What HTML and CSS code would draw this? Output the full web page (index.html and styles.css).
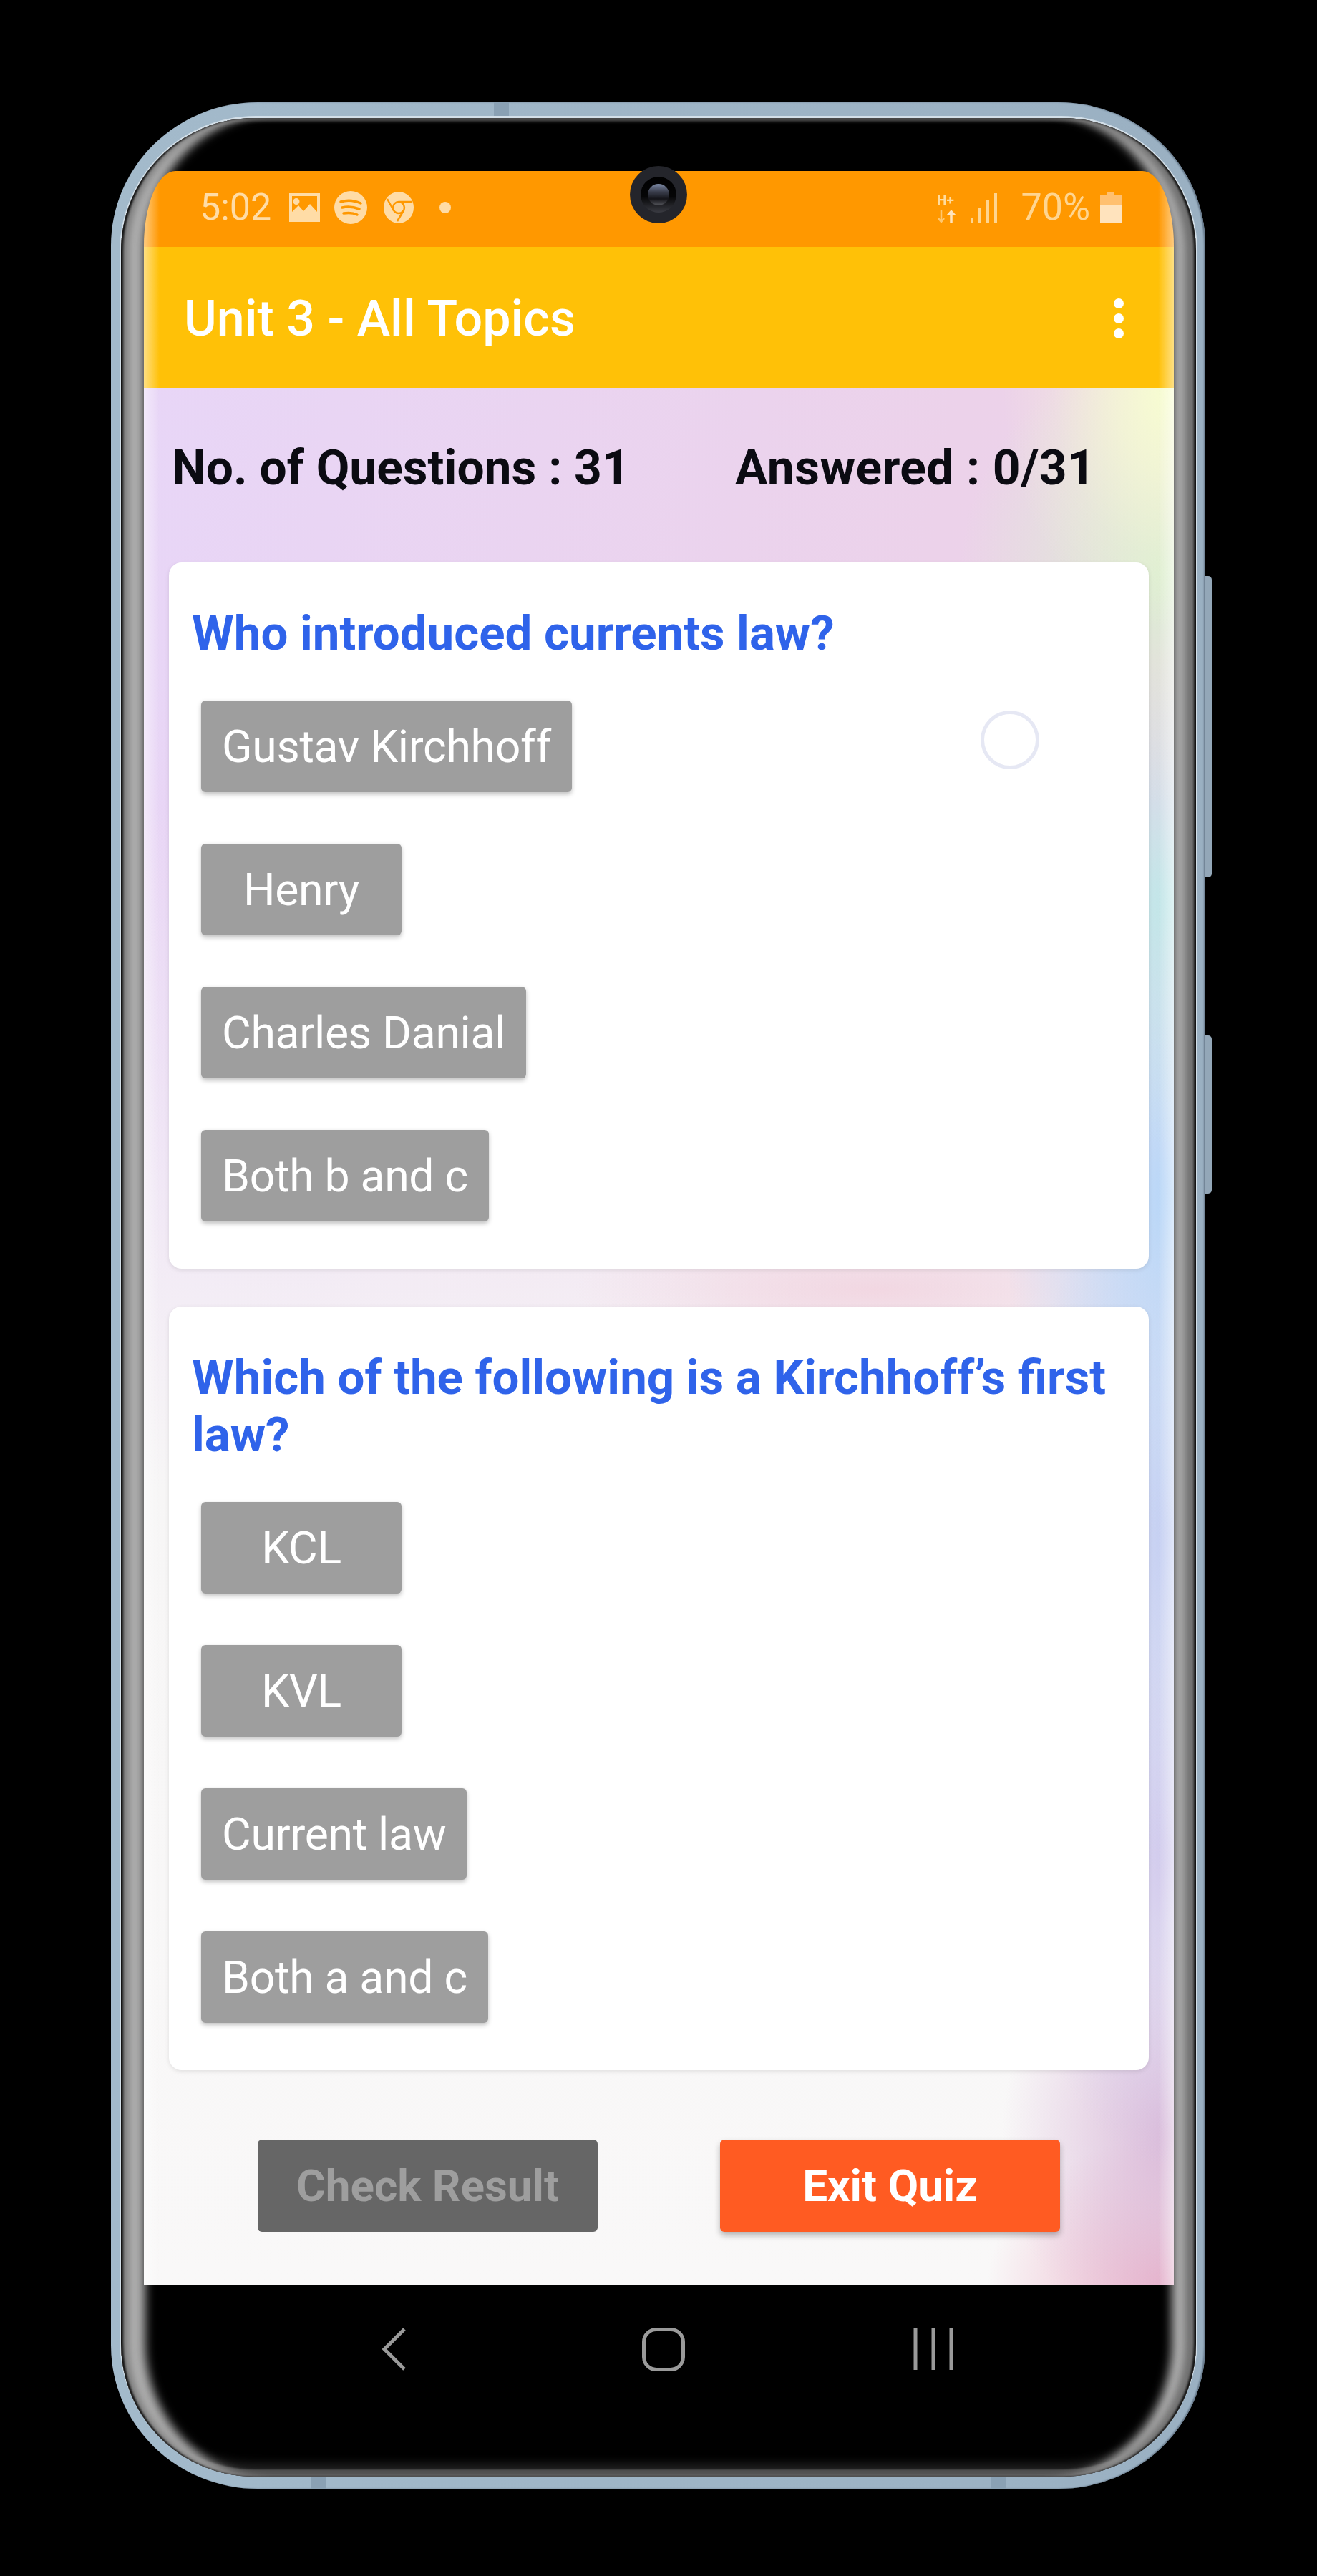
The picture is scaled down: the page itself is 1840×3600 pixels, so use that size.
FILE: index.html
```html
<!DOCTYPE html>
<html lang="en">
<head>
<meta charset="utf-8">
<title>Unit 3 - All Topics</title>
<link rel="stylesheet" href="styles.css">
</head>
<body>
<div class="phone">
  <span class="side-key key-a"></span>
  <span class="side-key key-b"></span>
  <span class="tick tick-top"></span>
  <span class="tick tick-bl"></span>
  <span class="tick tick-br"></span>
  <div class="rim">
    <div class="bezel">
      <span class="camera"><span class="well"><span class="lens"></span></span></span>
      <div class="screen">
        <div class="status">
          <div class="status-left">
            <span class="time">5:02</span>
            <svg class="ic ic-gallery" viewBox="0 0 43 40"><path fill="currentColor" fill-rule="evenodd" d="M0 0h43v40H0zM4 4v22l9-9 7 8 9-10 10 11V4zM10 7a4.500 4.500 0 1 1 0 9 4.500 4.500 0 0 1 0-9z"/></svg>
            <svg class="ic ic-spotify" viewBox="0 0 46 46"><circle cx="23" cy="23" r="23" fill="currentColor"/><path d="M9 15c9-3 19-2 28 2M11 23c8-2 16-1 24 2M13 31c6-1 13-1 19 2" fill="none" stroke="#ff9800" stroke-width="3.500" stroke-linecap="round"/></svg>
            <svg class="ic ic-chrome" viewBox="0 0 42 44"><ellipse cx="21" cy="22" rx="21" ry="22" fill="currentColor"/><circle cx="21" cy="22" r="8" fill="none" stroke="#ff9800" stroke-width="2.500"/><path d="M21 14h18M14 26 5 10M28 26l-9 15" fill="none" stroke="#ff9800" stroke-width="2.500"/></svg>
            <span class="dot"></span>
          </div>
          <div class="status-right">
            <svg class="ic ic-net" viewBox="0 0 30 44"><text x="1" y="18" class="net-text">H+</text><path d="M7 26v16M3 37l4 5 4-5" fill="none" stroke="currentColor" stroke-width="2.500" opacity=".7"/><path d="M21 44V32" fill="none" stroke="#ffe3bd" stroke-width="3.500"/><path d="m14 33 7-8 7 8z" fill="#ffe3bd"/></svg>
            <svg class="ic ic-bars" viewBox="0 0 36 44"><path d="M1 37v7M11 22v22M23 12v32M34 2v42" fill="none" stroke="currentColor" stroke-width="4"/></svg>
            <span class="pct">70%</span>
            <svg class="ic ic-batt" viewBox="0 0 30 44"><path d="M10 0h10v4h10v40H0V4h10z" fill="#ffc070"/><path d="M0 19h30v25H0z" fill="#ffe3bd"/></svg>
          </div>
        </div>
        <header class="toolbar">
          <h1 class="title">Unit 3 - All Topics</h1>
          <div class="menu"><i></i><i></i><i></i></div>
        </header>
        <main class="content">
          <div class="stats">
            <span class="stat-a">No. of Questions : 31</span>
            <span class="stat-b">Answered : 0/31</span>
          </div>
          <section class="card">
            <span class="radio"></span>
            <h2 class="question">Who introduced currents law?</h2>
            <div class="options">
              <button class="opt">Gustav Kirchhoff</button>
              <button class="opt">Henry</button>
              <button class="opt">Charles Danial</button>
              <button class="opt">Both b and c</button>
            </div>
          </section>
          <section class="card">
            <h2 class="question">Which of the following is a Kirchhoff’s first law?</h2>
            <div class="options">
              <button class="opt">KCL</button>
              <button class="opt">KVL</button>
              <button class="opt">Current law</button>
              <button class="opt">Both a and c</button>
            </div>
          </section>
          <div class="actions">
            <button class="act act-check">Check Result</button>
            <button class="act act-exit">Exit Quiz</button>
          </div>
        </main>
      </div>
      <nav class="navbar">
        <svg class="nav-back" viewBox="0 0 34 60"><path d="M31 2 3 30l28 28" fill="none" stroke="currentColor" stroke-width="5"/></svg>
        <span class="nav-home"></span>
        <svg class="nav-recent" viewBox="0 0 56 60"><path d="M3 1v58M28 1v58M53 1v58" fill="none" stroke="currentColor" stroke-width="5"/></svg>
      </nav>
    </div>
  </div>
</div>
</body>
</html>
```
FILE: styles.css
```css
* { box-sizing: border-box; }
html, body { margin: 0; padding: 0; background: #000; }
body {
  width: 1840px;
  height: 3600px;
  padding: 143px 0 0 155px;
  font-family: Roboto, "Liberation Sans", sans-serif;
  overflow: hidden;
}
.phone {
  position: relative;
  width: 1529px;
  height: 3335px;
  padding: 19px 11px 17px 12px;
  border-radius: 205px / 200px;
  background: linear-gradient(to right, #a3bacb 0, #9ab0c2 100%);
  box-shadow: inset -2px 0 2px #66788a;
}
.rim {
  height: 100%;
  padding: 3px 2px 0 2px;
  border-radius: 190px;
  background: #d3dfe8;
}
.bezel {
  position: relative;
  height: 100%;
  padding: 74px 31px 0 32px;
  border-radius: 186px;
  background: #000;
  box-shadow:
    inset 4px 0 3px -1px #111,
    inset 14px 0 12px -4px #777,
    inset -4px 0 3px -1px #111,
    inset -20px 0 12px -4px #6f6f6f,
    inset 44px 0 14px -10px #aeaeae,
    inset -44px 0 14px -10px #b0b0b0,
    inset 0 5px 4px -1px #444,
    inset 0 -11px 2px -1px #505050,
    inset 0 -26px 14px -8px #222;
}
.side-key {
  position: absolute;
  right: -9px;
  width: 9px;
  border-radius: 0 5px 5px 0;
  background: #93a7b8;
}
.key-a { top: 662px; height: 421px; }
.key-b { top: 1304px; height: 221px; }
.tick {
  position: absolute;
  width: 21px;
  height: 17px;
  background: #8aa1b4;
}
.tick-top { top: 0; left: 535px; height: 19px; }
.tick-bl { bottom: 0; left: 280px; }
.tick-br { bottom: 0; left: 1229px; }
.camera {
  position: absolute;
  z-index: 3;
  left: 711px;
  top: 67px;
  width: 80px;
  height: 80px;
  border-radius: 50%;
  background: #24252b;
  display: flex;
  align-items: center;
  justify-content: center;
}
.well {
  width: 50px;
  height: 50px;
  border-radius: 50%;
  background: linear-gradient(to bottom, #000 0, #050506 55%, #3a3b42 100%);
  display: flex;
  align-items: center;
  justify-content: center;
}
.lens {
  width: 30px;
  height: 30px;
  border-radius: 50%;
  background: linear-gradient(to bottom, #7d8aa6 0, #3d4150 35%, #131318 70%, #55565c 100%);
}
.screen {
  position: relative;
  height: 2955px;
  overflow: hidden;
  border-radius: 44px 44px 0 0 / 105px 105px 0 0;
  filter: blur(.6px);
}
.screen::after {
  content: "";
  position: absolute;
  inset: 0;
  pointer-events: none;
  background:
    linear-gradient(to right, rgba(255,255,255,.5) 0, rgba(255,255,255,0) 22px),
    linear-gradient(to left, rgba(255,255,255,.5) 0, rgba(255,255,255,0) 22px);
}
.status {
  height: 106px;
  background: #ff9800;
  color: #ffdca6;
  display: flex;
  align-items: flex-start;
  justify-content: space-between;
  padding: 0 73px 0 78px;
}
.status-left, .status-right { display: flex; align-items: center; height: 102px; }
.time { font-size: 52px; line-height: 102px; width: 125px; }
.ic { display: block; }
.ic-gallery { width: 43px; height: 40px; }
.ic-spotify { width: 46px; height: 46px; margin-left: 20px; }
.ic-chrome { width: 42px; height: 44px; margin-left: 23px; }
.dot { width: 16px; height: 16px; border-radius: 50%; background: currentColor; margin-left: 36px; }
.ic-net { width: 30px; height: 44px; color: #ffdc9e; }
.net-text { font: 700 19px Roboto, sans-serif; fill: currentColor; }
.ic-bars { width: 36px; height: 44px; margin-left: 19px; color: #ffd590; }
.pct { font-size: 52px; line-height: 102px; margin-left: 33px; color: #ffd590; }
.ic-batt { width: 30px; height: 44px; margin-left: 14px; }
.toolbar {
  height: 197px;
  background: #ffc107;
  display: flex;
  align-items: center;
  justify-content: space-between;
  padding: 3px 70px 0 56px;
}
.title { margin: 0; font-size: 70px; font-weight: 500; color: #fff; line-height: 1; }
.menu { display: flex; flex-direction: column; gap: 7px; }
.menu i { display: block; width: 14px; height: 14px; border-radius: 50%; background: #fff; }
.content {
  height: 2652px;
  padding: 0 35px;
  background:
    radial-gradient(ellipse 240px 340px at 100% 0, #f8ffd0 0, rgba(248,255,208,.65) 35%, rgba(248,255,208,.2) 70%, rgba(248,255,208,0) 100%),
    radial-gradient(ellipse 300px 320px at 100% 262px, rgba(218,240,208,.95) 0, rgba(218,240,208,0) 100%),
    radial-gradient(ellipse 240px 340px at 100% 720px, rgba(190,232,232,.95) 0, rgba(190,232,232,0) 100%),
    radial-gradient(ellipse 240px 480px at 100% 1130px, #b6d6f8 0, rgba(182,214,248,0) 100%),
    radial-gradient(ellipse 230px 480px at 100% 1600px, #c2cdf2 0, rgba(194,205,242,0) 100%),
    radial-gradient(ellipse 220px 440px at 100% 2050px, #d0c8ec 0, rgba(208,200,236,0) 100%),
    radial-gradient(ellipse 240px 300px at 100% 2440px, #d9b8d8 0, rgba(217,184,216,0) 100%),
    radial-gradient(ellipse 260px 210px at 100% 100%, #eaaec6 0, rgba(234,174,198,.5) 50%, rgba(234,174,198,0) 100%),
    radial-gradient(ellipse 420px 90px at 1020px 1260px, rgba(240,198,212,.55) 0, rgba(240,198,212,0) 100%),
    linear-gradient(to bottom, rgba(248,248,248,0) 0, rgba(248,248,248,0) 22%, #f7f6f6 58%, #f9f8f8 100%),
    linear-gradient(100deg, #e8d6f7 0, #ecd2ea 60%, #eed2e8 100%);
}
.stats {
  height: 244px;
  padding: 0 0 20px 4px;
  display: flex;
  align-items: center;
  font-size: 67.7px;
  font-weight: 700;
  color: #0b0b12;
}
.stat-a { width: 787px; }
.stat-b { letter-spacing: .45px; }
.card {
  position: relative;
  background: #fff;
  border-radius: 18px;
  padding: 59px 32px 66px;
  margin-bottom: 53px;
  box-shadow: 0 2px 6px rgba(0,0,0,.1);
}
.radio {
  position: absolute;
  left: 1134px;
  top: 207px;
  width: 82px;
  height: 82px;
  border-radius: 50%;
  border: 5px solid #e6e8f4;
}
.question {
  margin: 0 0 54px;
  font-size: 67.2px;
  line-height: 80px;
  font-weight: 700;
  color: #2f63ea;
}
.options {
  display: flex;
  flex-direction: column;
  align-items: flex-start;
  gap: 72px;
  padding-left: 13px;
}
.opt {
  min-width: 280px;
  height: 128px;
  padding: 0 29px;
  border: 0;
  border-radius: 6px;
  background: #9e9e9e;
  color: #fff;
  font: 400 62.5px Roboto, sans-serif;
  letter-spacing: -.3px;
  box-shadow: 0 3px 6px rgba(0,0,0,.25);
}
.actions {
  display: flex;
  gap: 171px;
  padding: 44px 0 0 124px;
}
.act {
  width: 475px;
  height: 129px;
  border: 0;
  border-radius: 6px;
  font: 700 62px Roboto, sans-serif;
}
.act-check { background: #666; color: #9e9e9e; }
.act-exit { background: #ff5b22; color: #fff; box-shadow: 0 5px 8px rgba(0,0,0,.28); }
.navbar {
  height: 266px;
  display: flex;
  align-items: flex-start;
  padding-top: 59px;
  color: #9a9a9a;
}
.nav-back { width: 34px; height: 60px; margin-left: 333px; }
.nav-home {
  width: 60px;
  height: 61px;
  margin-left: 329px;
  border: 5px solid currentColor;
  border-radius: 20px;
}
.nav-recent { width: 56px; height: 60px; margin-left: 319px; }
```
